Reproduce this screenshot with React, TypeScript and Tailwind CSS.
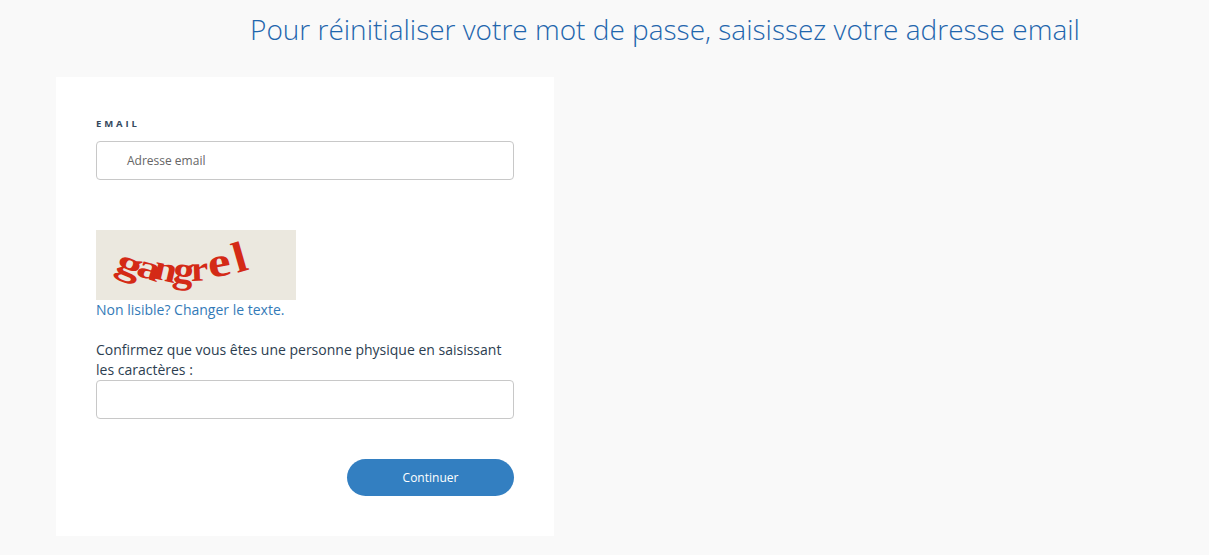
export default function App() {
  return (
    <div className="min-h-[555px] bg-[#f9f9f9] font-['Open_Sans',sans-serif] overflow-hidden">
      <h1 className="pl-[250px] pt-[11px] h-[77px] text-[28px] leading-[36px] font-light text-[#1f66ad] whitespace-nowrap">
        Pour réinitialiser votre mot de passe, saisissez votre adresse email
      </h1>
      <div className="ml-[56px] w-[498px] h-[459px] bg-white px-[40px] pt-[41px]">
        <label className="block text-[9.5px] leading-[12px] font-bold tracking-[0.3em] text-[#34495e]">EMAIL</label>
        <div className="mt-[11px] h-[39px] rounded-[4px] border border-[#c8c8c8] flex items-center pl-[30px] text-[12px] text-[#666666]">
          Adresse email
        </div>
        <div className="mt-[50px] w-[200px] h-[70px] bg-[#ebe8df]">
          <svg width="200" height="70" viewBox="0 0 200 70">
            <g fill="#d42a16" fontFamily="'Liberation Serif', serif" fontWeight="700">
              <text transform="translate(18 40) rotate(22) scale(1.4 1)" fontSize="36">g</text>
              <text transform="translate(39 45) rotate(18) scale(1.3 .95)" fontSize="36">a</text>
              <text transform="translate(56 48) rotate(13) scale(1.15 1)" fontSize="36">n</text>
              <text transform="translate(76 51) rotate(8) scale(1.15 1.05)" fontSize="36">g</text>
              <text transform="translate(95 51) rotate(-2) scale(1.1 1)" fontSize="36">r</text>
              <text transform="translate(114 48) rotate(-10) scale(1.35 1.1)" fontSize="38">e</text>
              <text transform="translate(141 43) rotate(-16) scale(1.35 1.2)" fontSize="36">l</text>
            </g>
          </svg>
        </div>
        <a className="block text-[14px] leading-[20px] text-[#337ab7]">Non lisible? Changer le texte.</a>
        <p className="mt-[20px] text-[14px] leading-[20px] text-[#2c3e50]">
          Confirmez que vous êtes une personne physique en saisissant les caractères :
        </p>
        <div className="h-[39px] rounded-[4px] border border-[#c8c8c8]" />
        <div className="mt-[40px] flex justify-end">
          <button className="w-[167px] h-[37px] rounded-full bg-[#337fc1] text-white text-[12px]">Continuer</button>
        </div>
      </div>
    </div>
  );
}
